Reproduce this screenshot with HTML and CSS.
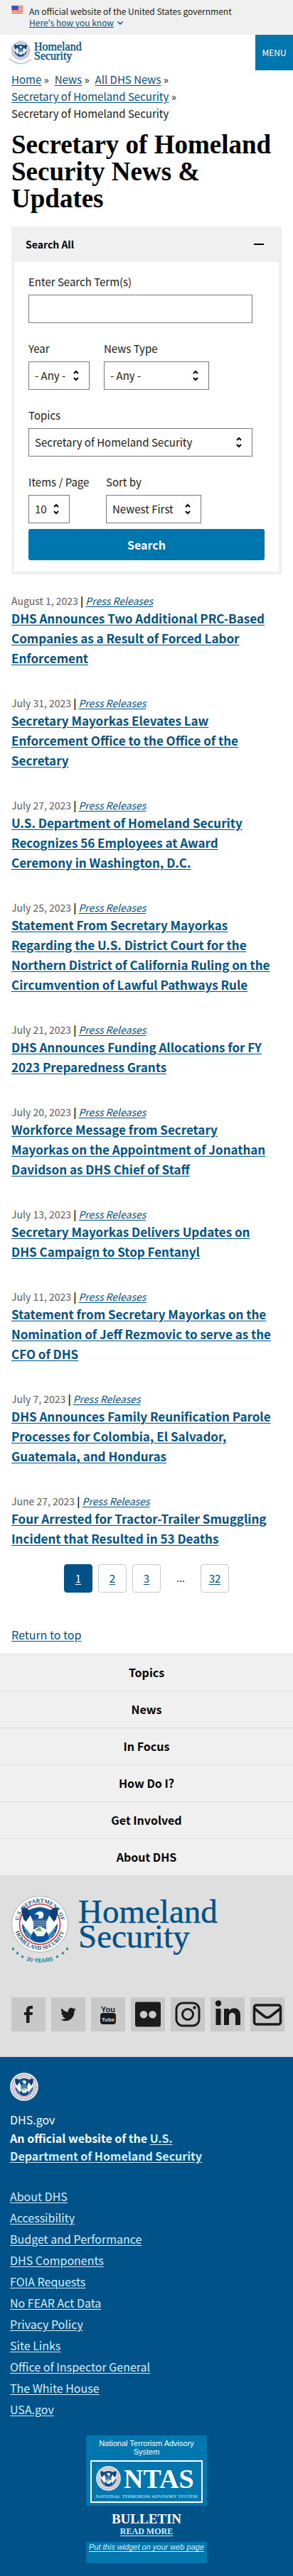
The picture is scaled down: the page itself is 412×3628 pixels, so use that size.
FILE: index.html
```html
<!DOCTYPE html>
<html lang="en">
<head>
<meta charset="utf-8">
<meta name="viewport" content="width=device-width, initial-scale=1">
<title>Secretary of Homeland Security News &amp; Updates</title>
<link rel="stylesheet" href="styles.css">
</head>
<body>
<svg class="sprite" aria-hidden="true">
  <symbol id="eagle" viewBox="0 0 80 80">
    <circle cx="40" cy="40" r="39.500" fill="#fff" stroke="#a9b0b6" stroke-width="1"/>
    <circle cx="40" cy="40" r="28.500" fill="#fff" stroke="#c8303c" stroke-width="1.500"/>
    <circle cx="40" cy="41" r="25" fill="#0b5394"/>
    <path d="M15 31 L32 48 L28 55 Q20 46 15 39Z M65 31 L48 48 L52 55 Q60 46 65 39Z" fill="#fff"/>
    <path d="M14 17 Q21 15 25 21 L32 33 L28 42 Q17 36 15 26Z M66 17 Q59 15 55 21 L48 33 L52 42 Q63 36 65 26Z" fill="#0b3f73"/>
    <path d="M27 27 L33 42 L30 47 L20 37 M53 27 L47 42 L50 47 L60 37" fill="#fff"/>
    <path d="M24 20 Q40 13 56 20 L51 33 H29Z" fill="#0b5394"/>
    <path d="M33 26 Q38 20 44 23 Q47 28 43 32 H37 Q40 29 38 27Z" fill="#fff"/>
    <path d="M31 33 H49 V44 Q46 50 40 52 Q34 50 31 44Z" fill="#31638f"/>
    <path d="M31 36 H49 M31 39 H49 M31 42 H49" stroke="#8fb2cf" stroke-width="1"/>
    <path d="M30 48 L40 43 L51 48 L45 57 H36Z" fill="#f2f6f8"/>
    <path d="M33 49 L40 44 L43 50Z" fill="#82a45b"/>
    <path d="M18 45 L28 57 M19 51 L27 60 M24 59 L31 64 M62 45 L52 57 M61 51 L53 60 M56 59 L49 64" stroke="#7fb0d3" stroke-width="1.500"/>
  </symbol>
  <symbol id="seal-small" viewBox="0 0 80 80">
    <use href="#eagle" width="80" height="80"/>
    <circle cx="40" cy="40" r="34" fill="none" stroke="#8296ac" stroke-width="5" stroke-dasharray="3 2"/>
  </symbol>
  <symbol id="star" viewBox="0 0 10 10">
    <path fill="#1b7fa3" d="M5 0 6.300 3.500 10 3.700 7.100 6.100 8.100 10 5 7.800 1.900 10 2.900 6.100 0 3.700 3.700 3.500z"/>
  </symbol>
</svg>

<section class="banner" aria-label="Official government website">
  <svg class="flag" viewBox="0 0 16 11" aria-hidden="true">
    <path fill="#fff" d="M0 0h16v11H0z"/>
    <path fill="#db3e1f" d="M0 0h16v1H0zM0 2h16v1H0zM0 4h16v1H0zM0 6h16v1H0zM0 8h16v1H0zM0 10h16v1H0z"/>
    <path fill="#1e33b1" d="M0 0h9v6H0z"/>
    <path stroke="#fff" stroke-dasharray="1 1" d="M1 1.500h7M2 3.200h6M1 5h7" stroke-width=".6"/>
  </svg>
  <div>
    <p>An official website of the United States government</p>
    <button class="banner-toggle" type="button"><span>Here's how you know</span>
      <svg viewBox="0 0 10 8" aria-hidden="true"><path d="M1.500 2.500 5 6l3.500-3.500" fill="none" stroke="#005288" stroke-width="1.500"/></svg>
    </button>
  </div>
</section>

<header class="site-header">
  <a href="#" class="header-logo" aria-label="Homeland Security home">
    <svg viewBox="0 0 108 38">
      <use href="#seal-small" x="2" y="1" width="28" height="28"/>
      <path d="M1 27 Q16 40 31 27" fill="none" stroke="#7da7bd" stroke-width="1.500" stroke-dasharray="2 1"/>
      <text class="wordmark" x="35" y="15" font-size="16">Homeland</text>
      <text class="wordmark" x="35" y="28" font-size="16">Security</text>
    </svg>
  </a>
  <button class="menu-button" type="button">MENU</button>
</header>

<main>
  <nav class="breadcrumb" aria-label="Breadcrumbs">
    <ol>
      <li><a href="#">Home</a></li>
      <li><a href="#">News</a></li>
      <li><a href="#">All DHS News</a></li>
      <li><a href="#">Secretary of Homeland Security</a></li>
      <li>Secretary of Homeland Security</li>
    </ol>
  </nav>
  <h1>Secretary of Homeland Security News &amp; Updates</h1>

  <section class="accordion">
    <h2><button class="accordion-button" type="button" aria-expanded="true">Search All
      <svg viewBox="0 0 14 14" aria-hidden="true"><path d="M0 6h14v2H0z" fill="#000"/></svg></button></h2>
    <form class="filters">
      <div class="field wide"><label for="terms">Enter Search Term(s)</label><input id="terms" type="text"></div>
      <div class="field-row">
        <div class="field"><label for="year">Year</label><select id="year" class="w-year"><option>- Any -</option></select></div>
        <div class="field"><label for="type">News Type</label><select id="type" class="w-type"><option>- Any -</option></select></div>
      </div>
      <div class="field wide"><label for="topics">Topics</label><select id="topics"><option>Secretary of Homeland Security</option></select></div>
      <div class="field-row">
        <div class="field items-field"><label for="items">Items / Page</label><select id="items" class="w-items"><option>10</option></select></div>
        <div class="field"><label for="sort">Sort by</label><select id="sort" class="w-sort"><option>Newest First</option></select></div>
      </div>
      <button class="search-button" type="submit">Search</button>
    </form>
  </section>

  <ul class="news">
    <li><p><time>August 1, 2023</time> <b>|</b> <a href="#">Press Releases</a></p><h3><a href="#">DHS Announces Two Additional PRC-Based Companies as a Result of Forced Labor Enforcement</a></h3></li>
    <li><p><time>July 31, 2023</time> <b>|</b> <a href="#">Press Releases</a></p><h3><a href="#">Secretary Mayorkas Elevates Law Enforcement Office to the Office of the Secretary</a></h3></li>
    <li><p><time>July 27, 2023</time> <b>|</b> <a href="#">Press Releases</a></p><h3><a href="#">U.S. Department of Homeland Security Recognizes 56 Employees at Award Ceremony in Washington, D.C.</a></h3></li>
    <li><p><time>July 25, 2023</time> <b>|</b> <a href="#">Press Releases</a></p><h3><a href="#">Statement From Secretary Mayorkas Regarding the U.S. District Court for the Northern District of California Ruling on the Circumvention of Lawful Pathways Rule</a></h3></li>
    <li><p><time>July 21, 2023</time> <b>|</b> <a href="#">Press Releases</a></p><h3><a href="#">DHS Announces Funding Allocations for FY 2023 Preparedness Grants</a></h3></li>
    <li><p><time>July 20, 2023</time> <b>|</b> <a href="#">Press Releases</a></p><h3><a href="#">Workforce Message from Secretary Mayorkas on the Appointment of Jonathan Davidson as DHS Chief of Staff</a></h3></li>
    <li><p><time>July 13, 2023</time> <b>|</b> <a href="#">Press Releases</a></p><h3><a href="#">Secretary Mayorkas Delivers Updates on DHS Campaign to Stop Fentanyl</a></h3></li>
    <li><p><time>July 11, 2023</time> <b>|</b> <a href="#">Press Releases</a></p><h3><a href="#">Statement from Secretary Mayorkas on the Nomination of Jeff Rezmovic to serve as the CFO of DHS</a></h3></li>
    <li><p><time>July 7, 2023</time> <b>|</b> <a href="#">Press Releases</a></p><h3><a href="#">DHS Announces Family Reunification Parole Processes for Colombia, El Salvador, Guatemala, and Honduras</a></h3></li>
    <li><p><time>June 27, 2023</time> <b>|</b> <a href="#">Press Releases</a></p><h3><a href="#">Four Arrested for Tractor-Trailer Smuggling Incident that Resulted in 53 Deaths</a></h3></li>
  </ul>

  <nav class="pager" aria-label="Pagination">
    <a href="#" class="current" aria-current="page">1</a>
    <a href="#">2</a>
    <a href="#">3</a>
    <span>…</span>
    <a href="#">32</a>
  </nav>
</main>

<footer>
  <p class="return-top"><a href="#">Return to top</a></p>
  <nav class="footer-nav" aria-label="Footer navigation">
    <a href="#">Topics</a>
    <a href="#">News</a>
    <a href="#">In Focus</a>
    <a href="#">How Do I?</a>
    <a href="#">Get Involved</a>
    <a href="#">About DHS</a>
  </nav>

  <div class="footer-brand">
    <svg class="footer-logo" viewBox="0 0 292 100" role="img" aria-label="Homeland Security, 20 years">
      <defs>
        <path id="arc-top" d="M13.500 53.500 A30 30 0 1 1 66.500 53.500"/>
        <path id="arc-bottom" d="M4 40 A36 36 0 0 0 76 40"/>
        <path id="arc-years" d="M12 88 Q40 100 68 88"/>
      </defs>
      <use href="#eagle" x="0" y="0" width="80" height="80"/>
      <text class="seal-text"><textPath href="#arc-top" startOffset="50%">U.S. DEPARTMENT OF</textPath></text>
      <text class="seal-text"><textPath href="#arc-bottom" startOffset="50%">HOMELAND SECURITY</textPath></text>
      <use href="#star" x="0" y="72" width="5" height="5"/>
      <use href="#star" x="6" y="78" width="5" height="5"/>
      <use href="#star" x="13" y="83" width="5" height="5"/>
      <use href="#star" x="62" y="83" width="5" height="5"/>
      <use href="#star" x="70" y="78" width="5" height="5"/>
      <use href="#star" x="76" y="72" width="5" height="5"/>
      <text class="years"><textPath href="#arc-years" startOffset="50%">20 YEARS</textPath></text>
      <text class="wordmark" x="94" y="38" font-size="47">Homeland</text>
      <text class="wordmark" x="94" y="73" font-size="47">Security</text>
    </svg>
    <div class="social">
      <a href="#" aria-label="Facebook"><svg viewBox="0 0 48 48"><path d="M21 36V25h-3v-4h3v-3q0-6 6-6h3v4h-2q-2.500 0-2.500 2v3H30l-.5 4h-4v11z"/></svg></a>
      <a href="#" aria-label="Twitter"><svg viewBox="0 0 48 48"><path d="M35 17l-3 .8q2-1.200 2.400-2.600l-2.800 1.100c-3.500-3.700-8.600-.4-7.500 4.100-4 0-7.300-2-9.300-5-1.500 2.500-.8 5.200 1.400 6.600l-2-.6c0 2.300 1.500 4 3.700 4.600l-2 .1c.7 2 2.300 3 4.300 3.200-1.700 1.500-4 2.200-7 2 9 5.300 19.500-.4 19.200-11.800z"/></svg></a>
      <a href="#" aria-label="YouTube"><svg viewBox="0 0 48 48"><text class="you" x="24" y="21">You</text><rect x="13" y="22" width="22" height="16" rx="4"/><text class="tube" x="24" y="34">Tube</text></svg></a>
      <a href="#" aria-label="Flickr"><svg viewBox="0 0 48 48"><path fill-rule="evenodd" d="M9 6.500h30a3 3 0 0 1 3 3v29a3 3 0 0 1-3 3H9a3 3 0 0 1-3-3v-29a3 3 0 0 1 3-3zM18 19a5.300 5.300 0 1 0 0 10.600 5.300 5.300 0 0 0 0-10.600zm12.500 0a5.300 5.300 0 1 0 0 10.600 5.300 5.300 0 0 0 0-10.600z"/></svg></a>
      <a href="#" aria-label="Instagram"><svg viewBox="0 0 48 48"><g fill="none" stroke="#1b1b1b" stroke-width="3"><rect x="8" y="8" width="32" height="32" rx="9"/><circle cx="24" cy="24" r="7.500"/></g><circle cx="33.500" cy="14.500" r="2.200"/></svg></a>
      <a href="#" aria-label="LinkedIn"><svg viewBox="0 0 48 48"><circle cx="11" cy="8.500" r="4.200"/><path d="M7.500 16h7v23h-7zM19 16h7v3c4-6 16-5 16 6v14h-7V27c0-7-9-7-9 0v12h-7z"/></svg></a>
      <a href="#" aria-label="Email"><svg viewBox="0 0 48 48"><g fill="none" stroke="#1b1b1b" stroke-width="3.500"><rect x="5.500" y="11" width="37" height="27" rx="3"/><path d="M6 16 20 27q4 3 8 0L42 16"/></g></svg></a>
    </div>
  </div>

  <div class="identifier">
    <svg class="identifier-seal" viewBox="0 0 80 80" role="img" aria-label="DHS seal"><use href="#seal-small" width="80" height="80"/></svg>
    <p class="domain">DHS.gov</p>
    <p class="agency">An official website of the <a href="#">U.S. Department of Homeland Security</a></p>
    <ul class="required-links">
      <li><a href="#">About DHS</a></li>
      <li><a href="#">Accessibility</a></li>
      <li><a href="#">Budget and Performance</a></li>
      <li><a href="#">DHS Components</a></li>
      <li><a href="#">FOIA Requests</a></li>
      <li><a href="#">No FEAR Act Data</a></li>
      <li><a href="#">Privacy Policy</a></li>
      <li><a href="#">Site Links</a></li>
      <li><a href="#">Office of Inspector General</a></li>
      <li><a href="#">The White House</a></li>
      <li><a href="#">USA.gov</a></li>
    </ul>
    <div class="ntas">
      <div class="ntas-top">
        <p>National Terrorism Advisory System</p>
        <svg viewBox="0 0 158 60" role="img" aria-label="NTAS">
          <rect x="1" y="1" width="156" height="58" fill="none" stroke="#fff" stroke-width="2"/>
          <use href="#seal-small" x="8" y="8" width="35" height="35"/>
          <text class="ntas-word" x="47" y="39">NTAS</text>
          <text class="ntas-sub" x="79" y="53">NATIONAL TERRORISM ADVISORY SYSTEM</text>
        </svg>
      </div>
      <p class="bulletin">BULLETIN</p>
      <a href="#" class="read-more">READ MORE</a>
      <a href="#" class="widget-link">Put this widget on your web page</a>
    </div>
  </div>
</footer>
</body>
</html>
```
FILE: styles.css
```css
* { box-sizing: border-box; }
body {
  margin: 0;
  background: #fff;
  color: #1b1b1b;
  font-family: "Noto Sans CJK SC", "Open Sans", sans-serif;
  font-size: 15px;
  line-height: 24px;
}
p, h1, h2, h3, ul, ol { margin: 0; padding: 0; }
ul, ol { list-style: none; }
a { color: #005288; text-underline-offset: 2px; }
button, input, select { font: inherit; color: inherit; margin: 0; }
button { cursor: pointer; border: 0; }
svg { display: block; }
.sprite { position: absolute; width: 0; height: 0; }
.seal-text { font: bold 8px "Liberation Serif", serif; fill: #1a4f80; text-anchor: middle; }
.years { font: bold 8px "Liberation Sans", sans-serif; fill: #1b7fa3; text-anchor: middle; }
.wordmark { font-family: "Liberation Serif", serif; fill: #005288; stroke: #005288; stroke-width: 0.4px; }

.banner {
  display: flex;
  gap: 8px;
  padding: 8px 16px 9px;
  background: #f0f0f0;
  font-size: 12px;
  line-height: 16px;
}
.flag { width: 17px; height: 11px; flex: none; }
.banner-toggle {
  display: flex;
  align-items: center;
  gap: 4px;
  padding: 0;
  background: none;
  color: #005288;
}
.banner-toggle span { text-decoration: underline; }
.banner-toggle svg { width: 10px; height: 8px; }

.site-header { display: flex; justify-content: space-between; height: 50px; }
.header-logo { padding: 7px 0 0 13px; }
.header-logo svg { width: 108px; height: 38px; }
.menu-button { width: 53px; padding: 0; background: #0076ae; color: #fff; font-size: 12px; }

main { padding: 1px 16px 0; }
.breadcrumb ol { display: flex; flex-wrap: wrap; column-gap: 8px; }
.breadcrumb li:not(:last-child)::after { content: " »"; }
h1 {
  margin-top: 13px;
  font: bold 37px/38px "Liberation Serif", serif;
  color: #000;
}

.accordion { margin-top: 20px; border: 4px solid #f0f0f0; border-top: 0; }
.accordion h2 { font-size: 14px; line-height: 20px; }
.accordion-button {
  display: flex;
  justify-content: space-between;
  align-items: center;
  width: 100%;
  padding: 15px 21px 15px 16px;
  background: #f0f0f0;
  color: #000;
  font-weight: bold;
}
.accordion-button svg { width: 14px; height: 14px; }
.filters { padding: 16px 20px; }
.field-row { display: flex; gap: 20px; }
.field { display: flex; flex-direction: column; gap: 6px; margin-bottom: 24px; }
.wide { margin-right: 17px; }
.field-row:last-of-type .field { margin-bottom: 8px; }
.field input, .field select {
  height: 40px;
  padding: 0 8px;
  border: 1px solid #767a80;
  border-radius: 0;
  background: #fff;
}
.field select {
  appearance: none;
  background: url("data:image/svg+xml,%3Csvg xmlns='http://www.w3.org/2000/svg' width='8' height='16'%3E%3Cpath d='M1 5l3-3 3 3M1 11l3 3 3-3' fill='none' stroke='%23000' stroke-width='2'/%3E%3C/svg%3E") no-repeat right 14px center;
}
.w-year { width: 86px; }
.w-type { width: 148px; }
.w-items { width: 58px; }
.w-sort { width: 134px; }
.items-field { min-width: 89px; }
.search-button {
  display: block;
  width: 100%;
  height: 44px;
  border-radius: 3px;
  background: #0076ae;
  color: #fff;
  font-size: 16px;
  font-weight: bold;
}

.news { display: grid; gap: 38px; margin-top: 26px; padding-right: 8px; }
.news p { font-size: 14px; line-height: 22px; color: #000; }
.news time { color: #5c5c5c; }
.news p a { font-style: italic; }
.news h3 { font-size: 17px; line-height: 28px; }

.pager { display: flex; justify-content: center; gap: 8px; margin-top: 22px; }
.pager a, .pager span { width: 40px; height: 40px; line-height: 38px; text-align: center; }
.pager a { border: 1px solid #c9c9c9; border-radius: 4px; }
.pager span { font-family: "Open Sans", sans-serif; }
.pager .current { background: #005288; border-color: #005288; color: #fff; }

footer { font-size: 16px; }
.return-top { padding: 47px 16px 15px; }
.footer-nav a {
  display: block;
  padding: 13px 16px 14px;
  border-top: 1px solid #dfdfdf;
  background: #f0f0f0;
  color: #000;
  font-weight: bold;
  text-align: center;
  text-decoration: none;
}
.footer-brand { padding: 29px 12px 36px 16px; background: #dfdfdf; }
.footer-logo { width: 292px; height: 100px; overflow: visible; }
.social { display: flex; flex-wrap: wrap; gap: 8px; margin-top: 43px; }
.social a { width: 48px; height: 48px; background: #c8c8c8; }
.social svg { width: 48px; height: 48px; fill: #1b1b1b; }
.you, .tube { font: bold 11px "Liberation Sans", sans-serif; text-anchor: middle; }
.tube { font-size: 8px; fill: #dfdfdf; }

.identifier { padding: 22px 14px 18px; background: #005288; color: #fff; }
.identifier a { color: #d5eeff; }
.identifier-seal { width: 40px; height: 40px; }
.domain { margin-top: 14px; }
.agency { max-width: 280px; margin-top: 2px; line-height: 25px; font-weight: bold; }
.required-links { margin-top: 29px; line-height: 30px; }
.ntas {
  width: 170px;
  margin: 22px auto 0;
  text-align: center;
  font: 11px/12px "Liberation Sans", sans-serif;
}
.ntas-top { padding: 5px 6px 4px; background: #0076ae; }
.ntas-top svg { width: 158px; height: 60px; margin-top: 6px; }
.ntas-word { font: bold 38px "Liberation Serif", serif; fill: #fff; }
.ntas-sub { font: 7px "Liberation Serif", serif; fill: #d5eeff; text-anchor: middle; }
.ntas .bulletin { margin-top: 10px; font: bold 19px/18px "Liberation Serif", serif; }
.ntas .read-more { display: block; font: bold 12px/16px "Liberation Serif", serif; margin-bottom: 7px; }
.ntas .widget-link { display: block; height: 30px; background: #0076ae; font-style: italic; line-height: 15px; }
```
